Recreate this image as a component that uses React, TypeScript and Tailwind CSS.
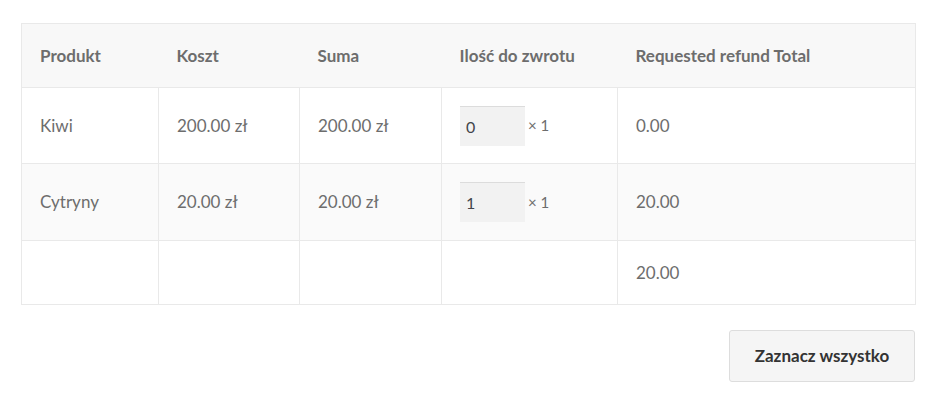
import React from "react";

const rows = [
  { name: "Kiwi", cost: "200.00 zł", sum: "200.00 zł", qty: "0", total: "0.00" },
  { name: "Cytryny", cost: "20.00 zł", sum: "20.00 zł", qty: "1", total: "20.00" },
];

const App = () => {
  const cell = "border border-[#e9e9e9] pl-[18px] pr-2 align-middle";

  return (
    <div className="w-[939px] h-[406px] bg-white font-['Lato','Liberation_Sans',sans-serif] text-[17px] text-[#6d6d6d]">
      <div className="pt-[23px] pl-[21px] w-[915px]">
        <table className="w-[894px] table-fixed border-collapse border border-[#e9e9e9]">
          <colgroup>
            <col className="w-[137px]" />
            <col className="w-[141px]" />
            <col className="w-[142px]" />
            <col className="w-[176px]" />
            <col className="w-[298px]" />
          </colgroup>
          <thead>
            <tr className="h-[64px] bg-[#f8f8f8] text-left font-bold">
              <th className="pl-[18px]">Produkt</th>
              <th className="pl-[18px]">Koszt</th>
              <th className="pl-[18px]">Suma</th>
              <th className="pl-[18px]">Ilość do zwrotu</th>
              <th className="pl-[18px]">Requested refund Total</th>
            </tr>
          </thead>
          <tbody>
            {rows.map((r, i) => (
              <tr key={r.name} className={i === 1 ? "h-[77px] bg-[#fafafa]" : "h-[76px] bg-white"}>
                <td className={cell}>{r.name}</td>
                <td className={cell}>{r.cost}</td>
                <td className={cell}>{r.sum}</td>
                <td className={cell}>
                  <div className="flex items-center gap-[3px]">
                    <input
                      type="text"
                      readOnly
                      value={r.qty}
                      className="w-[65px] h-[40px] bg-[#f2f2f2] border-t border-[#dcdcdc] pl-[6px] text-[16px] text-[#43454b] outline-none"
                    />
                    <span className="text-[15px]">× 1</span>
                  </div>
                </td>
                <td className={cell}>{r.total}</td>
              </tr>
            ))}
            <tr className="h-[64px] bg-white">
              <td className={cell}></td>
              <td className={cell}></td>
              <td className={cell}></td>
              <td className={cell}></td>
              <td className={cell}>20.00</td>
            </tr>
          </tbody>
        </table>
        <div className="flex justify-end mt-[25px]">
          <button className="w-[186px] h-[52px] bg-[#f5f5f5] border border-[#dddddd] rounded-[3px] font-bold text-[#333333]">
            Zaznacz wszystko
          </button>
        </div>
      </div>
    </div>
  );
};

export default App;
